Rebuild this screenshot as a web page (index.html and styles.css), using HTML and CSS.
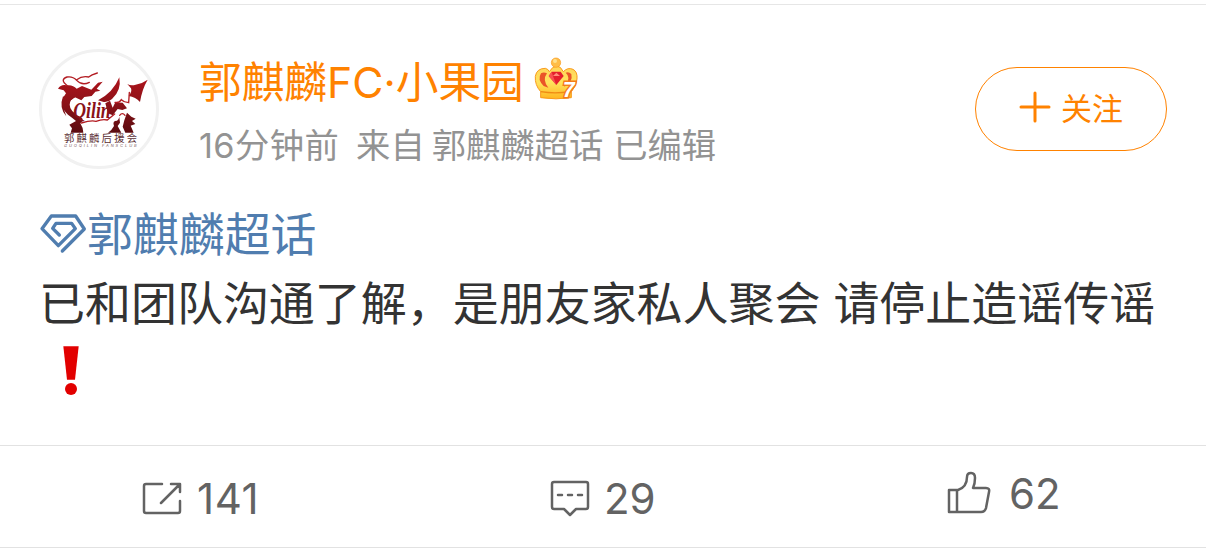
FILE: index.html
```
<!DOCTYPE html>
<html lang="zh-CN">
<head>
    <meta charset="UTF-8">
    <meta name="viewport" content="width=device-width, initial-scale=1.0">
    <title>郭麒麟FC·小果园</title>
    <link rel="stylesheet" href="styles.css">
</head>
<body>

<article class="post">
    <header class="post-header">
        <div class="avatar">
            <svg viewBox="36 36 342 342">
                <defs>
                    <linearGradient id="red" gradientUnits="userSpaceOnUse" x1="0" y1="110" x2="0" y2="280">
                        <stop offset="0" stop-color="#b0141c"/>
                        <stop offset="0.5" stop-color="#8a1218"/>
                        <stop offset="1" stop-color="#5a0c10"/>
                    </linearGradient>
                </defs>
                <g fill="url(#red)">
                    <path d="M84 146Q93 132 110 136Q128 133 140 146L156 138L184 149L204 128L218 125L200 146L211 152L196 155L185 168L163 171L154 181L135 172L124 180L115 171L99 174L108 160L101 151Z"/>
                    <path d="M116 160Q94 168 97 193Q98 211 114 224Q128 234 138 243L118 254L126 265L122 278L160 278Q159 262 151 250Q164 238 153 232Q119 215 119 194Q119 178 137 171Z"/>
                    <path d="M99 169Q86 204 109 229Q95 198 108 174Z"/>
                    <path d="M204 181Q250 157 268 112Q275 152 246 177Q234 188 221 186Z"/>
                    <path d="M226 190L240 182L248 203L256 187L278 188L291 205L277 210L263 207L248 226L234 220Z"/>
                    <path d="M292 132Q303 139 317 134Q338 130 353 119Q336 148 330 186Q317 171 296 168Q307 155 303 145Z"/>
                    <path d="M267 224Q270 234 261 242Q246 242 252 258Q246 270 234 278L274 278L263 258L270 248Z"/>
                    <path d="M291 218L304 230L317 236L306 243L316 252L302 257L311 278L286 278L278 260L283 241Z"/>
                </g>
                <g fill="none" stroke="#b31c22" stroke-width="4" stroke-linecap="round">
                    <path d="M112 137Q88 119 111 111Q128 108 140 121Q156 138 178 127"/>
                    <path d="M140 119Q156 107 176 111Q184 104 202 99"/>
                    <path d="M255 187Q267 190 274 179Q282 187 296 188L298 157"/>
                    <path d="M154 249Q184 240 198 244Q218 236 232 240L254 222"/>
                    <path d="M285 226Q277 216 269 226"/>
                </g>
                <text class="avatar-logo" x="130" y="235" textLength="112" lengthAdjust="spacingAndGlyphs">Qilin</text>
                <text class="avatar-name" x="102" y="306" textLength="219">郭麒麟后援会</text>
                <text class="avatar-sub" x="102" y="321" textLength="218">GUOQILIN FANSCLUB</text>
            </svg>
        </div>
        <div class="author">
            <div class="author-name">
                <span>郭麒麟FC·小果园</span>
                <svg class="crown" viewBox="0 0 132 132">
                    <defs>
                        <linearGradient id="gold" x1="0" y1="0" x2="0" y2="1">
                            <stop offset="0" stop-color="#ffd45a"/>
                            <stop offset="0.5" stop-color="#ffe35d"/>
                            <stop offset="1" stop-color="#ffb51f"/>
                        </linearGradient>
                    </defs>
                    <path d="M20 122L20 104Q2 84 4 58Q8 34 34 34Q43 36 46 44Q56 27 68 27Q80 27 88 44Q101 30 117 37Q131 44 129 66Q127 88 112 104V122Q66 129 20 122Z" fill="url(#gold)" stroke="#f99a1c" stroke-width="3"/>
                    <path d="M21 49Q9 68 29 87L43 92Q24 69 39 49Q29 44 21 49Z" fill="#ea5528"/>
                    <path d="M95 47Q110 60 97 81L90 90Q118 76 112 51Q104 43 95 47Z" fill="#ea5528"/>
                    <path d="M20 104Q63 111 108 104" fill="none" stroke="#f08a13" stroke-width="4"/>
                    <circle cx="66" cy="17" r="14" fill="#ffbd48" stroke="#f99a1c" stroke-width="2"/>
                    <circle cx="63" cy="12" r="6" fill="#ffe18d"/>
                    <path d="M53 44H80L89 57L67 84L44 57Z" fill="#e51f2c"/>
                    <path d="M53 44L57 57L67 84L44 57Z" fill="#f9524f"/>
                    <path d="M57 57L67 47L78 57Z" fill="#ff8c7a"/>
                    <text class="crown-level" x="86" y="121">7</text>
                </svg>
            </div>
            <div class="author-meta"><span class="time">16分钟前</span><span class="from">来自</span><span class="source">郭麒麟超话</span><span>已编辑</span></div>
        </div>
        <button class="follow">
            <svg viewBox="0 0 32 32"><path d="M16 2V30M2 16H30"/></svg>
            <span>关注</span>
        </button>
    </header>

    <div class="post-body">
        <a class="topic">
            <svg viewBox="0 0 138 120">
                <path d="M67 114L133 48L107 9H34L6 47L55 98L106 47L95 31H48L38 46L58 66"/>
            </svg>
            <span>郭麒麟超话</span>
        </a>
        <p class="post-text">已和团队沟通了解，是朋友家私人聚会 请停止造谣传谣</p>
        <svg class="mark" viewBox="0 0 48 150">
            <path d="M1 1H47L36 101H12Z"/>
            <circle cx="24" cy="129" r="18"/>
        </svg>
    </div>

    <footer class="post-actions">
        <div class="action share">
            <svg viewBox="0 0 40 34">
                <path d="M20 2H4Q2 2 2 4V29Q2 31 4 31H36Q38 31 38 29V19M19 21L37 3M29 2H38V10"/>
            </svg>
            <span>141</span>
        </div>
        <div class="action comment">
            <svg viewBox="0 0 40 37">
                <path d="M4 2H36Q38 2 38 4V27Q38 29 36 29H26L20 35L14 29H4Q2 29 2 27V4Q2 2 4 2Z"/>
                <path d="M8 15H12M18 15H22M28 15H32"/>
            </svg>
            <span>29</span>
        </div>
        <div class="action like">
            <svg viewBox="0 0 44 44">
                <path d="M2 19H11Q20 16 20 6Q20 2 24 2Q28 2 28 7Q28 13 26 17H39Q43 17 42 21L39 37Q38 41 34 41H2ZM10 19V41"/>
            </svg>
            <span>62</span>
        </div>
    </footer>
</article>

</body>
</html>
```
FILE: styles.css
```
body {
    margin: 0;
    padding: 4px 0 0;
    background-color: #fff;
    font-family: Inter, "Noto Sans CJK SC", sans-serif;
}
svg {
    display: block;
    flex-shrink: 0;
    overflow: visible;
}
.post {
    border-top: 1px solid #e6e6e6;
    border-bottom: 1px solid #e2e2e2;
}
.post-header {
    display: flex;
    height: 120px;
    padding: 44px 39px 0;
}
.avatar {
    box-sizing: border-box;
    width: 120px;
    height: 120px;
    border: 3px solid #f1f1f1;
    border-radius: 50%;
}
.avatar-logo {
    font: italic bold 72px "Liberation Serif", serif;
    fill: #8a1218;
}
.avatar-name {
    font: 31px "Noto Sans CJK SC", sans-serif;
    fill: #5b3034;
}
.avatar-sub {
    font: italic 12px Inter, sans-serif;
    fill: #79575a;
}
.author {
    margin-left: 40px;
}
.author-name {
    display: flex;
    height: 64px;
    line-height: 68px;
    font-size: 42.7px;
    color: #ff8200;
    white-space: nowrap;
}
.crown {
    width: 44px;
    height: 44px;
    margin: 8px 0 0 10px;
}
.crown-level {
    font: italic bold 64px "Liberation Sans", sans-serif;
    fill: #fff;
    stroke: #f47c1b;
    stroke-width: 9px;
    paint-order: stroke;
}
.author-meta {
    display: flex;
    line-height: 66px;
    font-size: 34.3px;
    color: #939393;
    white-space: nowrap;
}
.time {
    margin-right: 17px;
    letter-spacing: 0.4px;
}
.from {
    margin-right: 7px;
}
.source {
    margin-right: 10px;
}
.follow {
    display: flex;
    align-items: center;
    box-sizing: border-box;
    width: 192px;
    height: 84px;
    margin: 18px 0 0 auto;
    padding: 0 0 0 43px;
    border: 1px solid #ff8200;
    border-radius: 42px;
    background-color: #fff;
    color: #ff8200;
    font: 31px "Noto Sans CJK SC", sans-serif;
}
.follow svg {
    width: 32px;
    height: 32px;
    margin: -4px 10px 0 0;
    fill: none;
    stroke: #ff8200;
    stroke-width: 3;
    stroke-linecap: round;
}
.follow span {
    margin-top: -5px;
}
.post-body {
    height: 244px;
    padding: 32px 40px 0 39px;
}
.topic {
    display: flex;
    height: 68px;
    line-height: 67px;
    font-size: 45.9px;
    color: #507daf;
}
.topic svg {
    width: 46px;
    height: 40px;
    margin: 12px 1px 0 1px;
    fill: none;
    stroke: #507daf;
    stroke-width: 10;
    stroke-linecap: round;
    stroke-linejoin: round;
}
.post-text {
    margin: 0;
    line-height: 69px;
    font-size: 45.98px;
    color: #333;
    white-space: nowrap;
}
.mark {
    width: 16px;
    height: 50px;
    margin: 8px 0 0 24px;
    fill: #e20000;
}
.post-actions {
    display: flex;
    height: 101px;
    border-top: 1px solid #e2e2e2;
}
.action {
    display: flex;
    align-items: center;
    box-sizing: border-box;
    width: 402px;
    font-size: 42px;
    color: #636363;
}
.action svg {
    fill: none;
    stroke: #636363;
    stroke-width: 2.5;
    stroke-linecap: round;
    stroke-linejoin: round;
}
.share {
    padding: 4px 0 0 142px;
    letter-spacing: 0.6px;
}
.share svg {
    width: 40px;
    height: 34px;
    margin-right: 15px;
}
.comment {
    padding: 4px 0 0 148px;
}
.comment svg {
    width: 40px;
    height: 37px;
    margin-right: 14px;
}
.like {
    padding: 0 0 8px 143px;
}
.like svg {
    width: 44px;
    height: 44px;
    margin-right: 18px;
}
.like span {
    padding-top: 1px;
}
```
